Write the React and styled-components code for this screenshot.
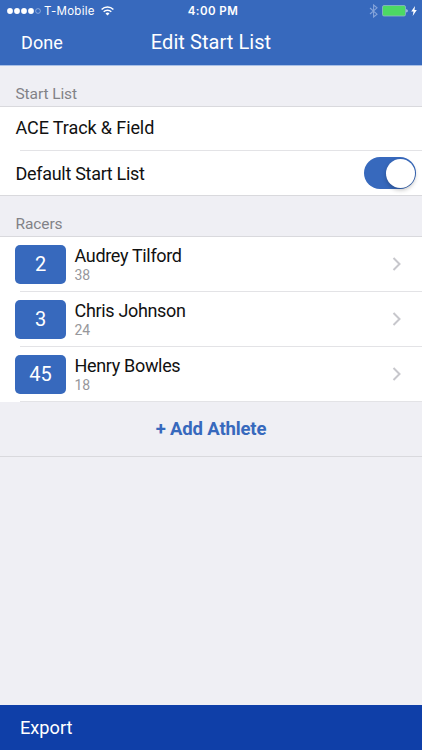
import styled, { createGlobalStyle } from "styled-components";

const GlobalStyle = createGlobalStyle`
    * {
        box-sizing: border-box;
    }
    body {
        margin: 0;
        background: #efeff4;
        font-family: Roboto, "Liberation Sans", sans-serif;
    }
`

const Screen = styled.div`
    display: flex;
    flex-direction: column;
    height: 100vh;
    overflow: hidden;
    background: #efeff4;
`

const Header = styled.header`
    height: 66px;
    flex: none;
    background: #3769bd;
    border-bottom: 1px solid #a9c0e6;
    color: #fff;
`

const StatusBar = styled.div`
    display: grid;
    grid-template-columns: 1fr auto 1fr;
    align-items: center;
    height: 21px;
    padding: 0 5px 0 7px;
    font-family: Inter, sans-serif;
    font-size: 11.5px;
    line-height: 19px;
`

const StatusGroup = styled.div`
    display: flex;
    align-items: center;
    justify-content: ${(props) => (props.$end ? "flex-end" : "flex-start")};
    gap: ${(props) => (props.$end ? "3px" : "0")};
`

const Carrier = styled.span`
    margin: 0 6px 0 3px;
    padding-top: 2px;
    letter-spacing: 0.3px;
`

const Clock = styled.span`
    padding: 2px 0 0 2px;
    font-weight: 600;
    letter-spacing: 0.45px;
`

const NavBar = styled.div`
    display: grid;
    grid-template-columns: 1fr auto 1fr;
    align-items: center;
    height: 42px;
    padding: 0 21px;
`

const NavButton = styled.span`
    font-size: 18px;
    letter-spacing: 0.1px;
`

const Title = styled.span`
    font-size: 20px;
    letter-spacing: 0.06px;
`

const SectionTitle = styled.div`
    height: 40px;
    flex: none;
    display: flex;
    align-items: flex-end;
    padding: 0 15.5px 3px;
    font-size: 15.5px;
    letter-spacing: -0.1px;
    line-height: 18px;
    color: #828287;
`

const List = styled.div`
    flex: none;
    background: #fff;
    border-top: 1px solid #d9d9dd;
    border-bottom: ${(props) => (props.$closed ? "1px solid #d9d9dd" : "none")};
`

const Row = styled.div`
    display: flex;
    align-items: center;
    height: ${(props) => props.$height}px;
    padding: 0 6px 0 15px;
    color: #111;
`

const Divider = styled.div`
    height: 1px;
    margin-left: 20px;
    background: #e3e3e6;
`

const Label = styled.span`
    flex: 1;
    padding: ${(props) => (props.$tight ? "2px 0 0 0.5px" : "0 0 2px 0.5px")};
    font-size: 18px;
    line-height: 22px;
    letter-spacing: ${(props) => (props.$tight ? "-0.3px" : "-0.1px")};
`

const Switch = styled.div`
    display: flex;
    justify-content: flex-end;
    width: 52px;
    height: 32px;
    padding: 1.5px;
    border-radius: 16px;
    background: #3769bd;
`

const Knob = styled.div`
    width: 29px;
    height: 29px;
    border-radius: 50%;
    background: #fff;
    box-shadow: 0 2px 4px rgba(0, 0, 0, 0.25);
`

const Bib = styled.div`
    width: 51px;
    height: 39px;
    margin-right: 8.5px;
    border-radius: 5px;
    background: #3769bd;
    color: #fff;
    font-size: 20px;
    line-height: 39px;
    text-align: center;
`

const Athlete = styled.div`
    flex: 1;
    display: flex;
    flex-direction: column;
    padding-top: 2px;
`

const Name = styled.span`
    font-size: 18px;
    line-height: 20px;
    letter-spacing: -0.33px;
`

const Age = styled.span`
    font-size: 14px;
    line-height: 18px;
    color: #97979b;
`

const Chevron = styled.svg`
    width: 10px;
    height: 16px;
    margin-right: 14px;
`

const AddButton = styled.div`
    height: 55px;
    flex: none;
    border-bottom: 1px solid #d9d9dd;
    color: #3769bd;
    font-size: 18.5px;
    font-weight: 700;
    letter-spacing: -0.15px;
    line-height: 54px;
    text-align: center;
`

const Footer = styled.footer`
    height: 45px;
    flex: none;
    margin-top: auto;
    padding: 0 20px;
    background: #0f3fa8;
    color: #fff;
    font-size: 18.2px;
    line-height: 45px;
`

const racers = [
    { bib: 2, name: "Audrey Tilford", age: 38 },
    { bib: 3, name: "Chris Johnson", age: 24 },
    { bib: 45, name: "Henry Bowles", age: 18 },
]

const Signal = () => (
    <svg width="34" height="8" viewBox="0 0 34 8">
        {[3, 10, 17, 24].map((x) => (
            <circle key={x} cx={x} cy="4" r="2.9" fill="#fff" />
        ))}
        <circle cx="31" cy="4" r="2.4" fill="none" stroke="#a9c0e6" strokeWidth="0.7" />
    </svg>
)

const Wifi = () => (
    <svg width="13" height="10" viewBox="0 0 13 10" fill="none" stroke="#fff" strokeWidth="1.5">
        <path d="M0.6 3.5a8.4 8.4 0 0 1 11.8 0" />
        <path d="M2.7 5.8a5.4 5.4 0 0 1 7.6 0" />
        <path d="M4.5 7.5a2.9 2.9 0 0 1 4 0L6.5 9.5z" fill="#fff" stroke="none" />
    </svg>
)

const Bluetooth = () => (
    <svg width="10" height="14" viewBox="0 0 10 14" fill="none" stroke="#86a5da" strokeWidth="1.1">
        <path d="M1 4l7 6.2L4.6 13V1L8 3.8 1 10" />
    </svg>
)

const Battery = () => (
    <svg width="26" height="12" viewBox="0 0 26 12">
        <rect x="0.5" y="0.5" width="23" height="10.5" rx="1.5" fill="#4cd964" stroke="#8fb6c8" strokeWidth="0.8" />
        <path d="M24.4 4v3.6q1.2-.4 1.2-1.8T24.4 4z" fill="#d5e1f4" />
    </svg>
)

const Bolt = () => (
    <svg width="6" height="10" viewBox="0 0 6 10">
        <path d="M4 0L0.2 5.6h2.3L1.7 10 5.8 4.1H3.5z" fill="#fff" />
    </svg>
)

const App = () => {
    return (
        <Screen>
            <GlobalStyle />
            <Header>
                <StatusBar>
                    <StatusGroup>
                        <Signal />
                        <Carrier>T-Mobile</Carrier>
                        <Wifi />
                    </StatusGroup>
                    <Clock>4:00 PM</Clock>
                    <StatusGroup $end>
                        <Bluetooth />
                        <Battery />
                        <Bolt />
                    </StatusGroup>
                </StatusBar>
                <NavBar>
                    <NavButton>Done</NavButton>
                    <Title>Edit Start List</Title>
                </NavBar>
            </Header>

            <SectionTitle>Start List</SectionTitle>
            <List $closed>
                <Row $height={43}>
                    <Label>ACE Track &amp; Field</Label>
                </Row>
                <Divider />
                <Row $height={44}>
                    <Label $tight>Default Start List</Label>
                    <Switch>
                        <Knob />
                    </Switch>
                </Row>
            </List>

            <SectionTitle>Racers</SectionTitle>
            <List>
                {racers.map((racer) => (
                    <div key={racer.bib}>
                        <Row $height={54}>
                            <Bib>{racer.bib}</Bib>
                            <Athlete>
                                <Name>{racer.name}</Name>
                                <Age>{racer.age}</Age>
                            </Athlete>
                            <Chevron viewBox="0 0 10 16" fill="none" stroke="#c7c7cc" strokeWidth="2">
                                <path d="M1.5 2l6 6-6 6" />
                            </Chevron>
                        </Row>
                        <Divider />
                    </div>
                ))}
            </List>
            <AddButton>+ Add Athlete</AddButton>
            <Footer>Export</Footer>
        </Screen>
    )
}

export default App;
